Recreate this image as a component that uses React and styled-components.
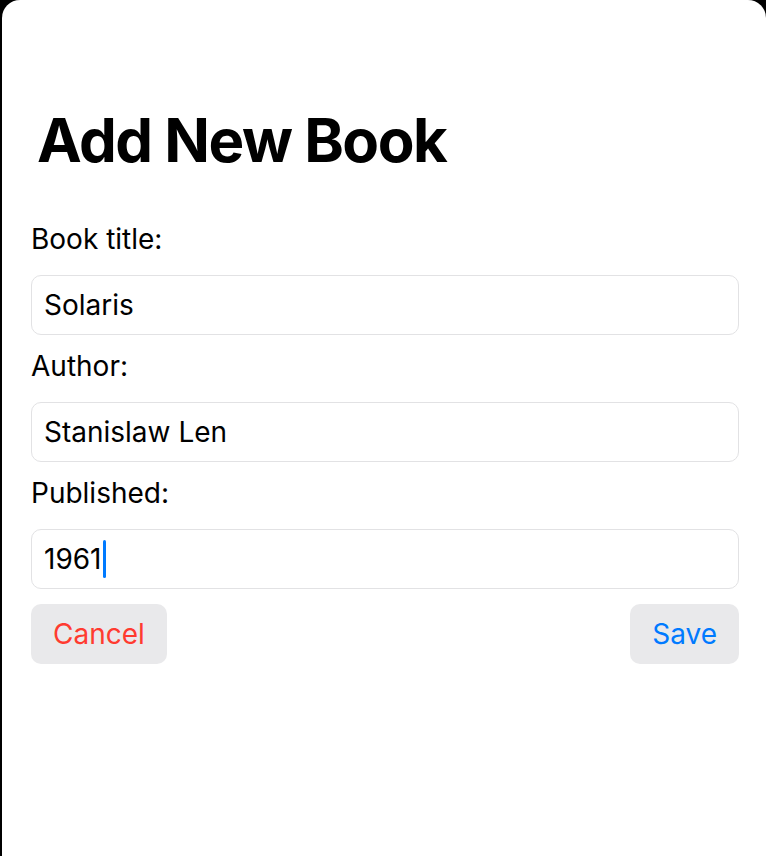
import React from "react";
import styled, { createGlobalStyle } from "styled-components";

const GlobalStyle = createGlobalStyle`
  html, body {
    margin: 0;
    padding: 0;
    background: #000;
  }
  body {
    font-family: Inter, "Noto Sans", "Liberation Sans", sans-serif;
    -webkit-font-smoothing: antialiased;
  }
`;

const fields = [
  { label: "Book title:", value: "Solaris" },
  { label: "Author:", value: "Stanislaw Len" },
  { label: "Published:", value: "1961", focused: true },
];

function App() {
  return (
    <>
      <GlobalStyle />
      <Sheet>
        <Title>Add New Book</Title>
        <Form>
          {fields.map((f) => (
            <Field key={f.label}>
              <Label>{f.label}</Label>
              <TextBox>
                <span>{f.value}</span>
                {f.focused && <Caret />}
              </TextBox>
            </Field>
          ))}
          <Actions>
            <ActionButton tone="#ff3b30">Cancel</ActionButton>
            <ActionButton tone="#007aff">Save</ActionButton>
          </Actions>
        </Form>
      </Sheet>
    </>
  );
}

export default App;

const Sheet = styled.div`
  margin-left: 2px;
  min-height: 856px;
  box-sizing: border-box;
  background: #fff;
  border-radius: 18px 18px 0 0;
  padding: 104px 27px 0 29px;
`;

const Title = styled.h1`
  margin: 0 0 47px 6px;
  font-size: 60px;
  line-height: 72px;
  font-weight: 700;
  letter-spacing: -1.5px;
  color: #000;
`;

const Form = styled.div`
  display: flex;
  flex-direction: column;
  gap: 15px;
`;

const Field = styled.div`
  display: flex;
  flex-direction: column;
  gap: 20px;
`;

const Label = styled.div`
  font-size: 28px;
  line-height: 32px;
  color: #000;
`;

const TextBox = styled.div`
  height: 60px;
  box-sizing: border-box;
  border: 1px solid #e2e2e4;
  border-radius: 10px;
  padding: 0 12px;
  display: flex;
  align-items: center;
  font-size: 28px;
  color: #000;
`;

const Caret = styled.span`
  width: 3px;
  height: 38px;
  border-radius: 2px;
  background: #007aff;
  margin-left: 1px;
`;

const Actions = styled.div`
  display: flex;
  justify-content: space-between;
`;

const ActionButton = styled.button`
  height: 60px;
  padding: 0 22px;
  border: none;
  border-radius: 10px;
  background: #e9e9eb;
  color: ${(p) => p.tone};
  font-family: inherit;
  font-size: 28px;
  cursor: pointer;
`;
